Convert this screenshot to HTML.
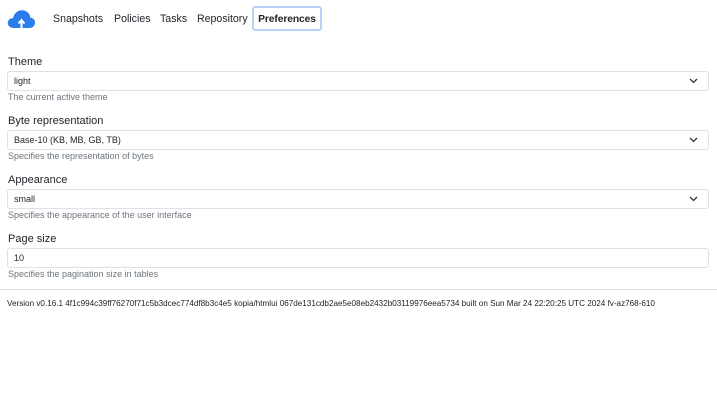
<!DOCTYPE html>
<html><head><style>
*{box-sizing:border-box;margin:0;padding:0}
body{width:717px;height:400px;background:#fff;font-family:"Liberation Sans",sans-serif;color:#212529;position:relative;overflow:hidden}
.nav{position:absolute;top:0;left:0;height:38px}
.nav span{position:absolute;top:13px;font-size:10.6px;color:#212529}
.pref{position:absolute;left:252px;top:6px;width:70px;height:25px;border:2px solid #b9d1f7;border-radius:3px;font-weight:bold;font-size:10.3px;padding-top:6px;text-align:center;letter-spacing:-0.1px}
.lbl{position:absolute;left:8px;font-size:11px}
.box{position:absolute;left:7px;width:702px;height:20px;border:1px solid #dee2e6;border-radius:3px;font-size:9px;padding:4px 0 0 6px}
.help{position:absolute;left:8px;font-size:9px;color:#6c757d}
.chev{position:absolute;right:10px;top:6px}
hr{position:absolute;top:289px;left:0;width:717px;border:0;border-top:1px solid #dee2e6}
.ver{position:absolute;left:7px;top:299px;font-size:8.15px;white-space:nowrap}
</style></head><body>
<svg style="position:absolute;left:7px;top:9px" width="29" height="20" viewBox="0 0 29 20"><path d="M7 19 C2 19 0 15.5 1 12.5 C2 10 4 9 6 9.3 C7 4 11 1 15.5 1.3 C20 1.6 23 5 23.3 8.5 C26.5 9 28.5 11.5 28 14.5 C27.5 17.5 25 19 22.5 19 Z" fill="#2b7de9"/><path d="M14.5 19 V12 M11.5 14.5 L14.5 11 L17.5 14.5" stroke="#fff" stroke-width="2" fill="none"/></svg>
<div class="nav">
<span style="left:53px">Snapshots</span>
<span style="left:114px">Policies</span>
<span style="left:160px">Tasks</span>
<span style="left:197px">Repository</span>
</div>
<div class="pref">Preferences</div>

<div class="lbl" style="top:56px">Theme</div>
<div class="box" style="top:71px">light<svg class="chev" width="9" height="6" viewBox="0 0 9 6"><path d="M1 1 L4.5 4.5 L8 1" stroke="#333" stroke-width="1.3" fill="none"/></svg></div>
<div class="help" style="top:92px">The current active theme</div>

<div class="lbl" style="top:115px">Byte representation</div>
<div class="box" style="top:130px">Base-10 (KB, MB, GB, TB)<svg class="chev" width="9" height="6" viewBox="0 0 9 6"><path d="M1 1 L4.5 4.5 L8 1" stroke="#333" stroke-width="1.3" fill="none"/></svg></div>
<div class="help" style="top:151px">Specifies the representation of bytes</div>

<div class="lbl" style="top:174px">Appearance</div>
<div class="box" style="top:189px">small<svg class="chev" width="9" height="6" viewBox="0 0 9 6"><path d="M1 1 L4.5 4.5 L8 1" stroke="#333" stroke-width="1.3" fill="none"/></svg></div>
<div class="help" style="top:210px">Specifies the appearance of the user interface</div>

<div class="lbl" style="top:233px">Page size</div>
<div class="box" style="top:248px">10</div>
<div class="help" style="top:269px">Specifies the pagination size in tables</div>

<hr>
<div class="ver">Version v0.16.1 4f1c994c39ff76270f71c5b3dcec774df8b3c4e5 kopia/htmlui 067de131cdb2ae5e08eb2432b03119976eea5734 built on Sun Mar 24 22:20:25 UTC 2024 fv-az768-610</div>
</body></html>
